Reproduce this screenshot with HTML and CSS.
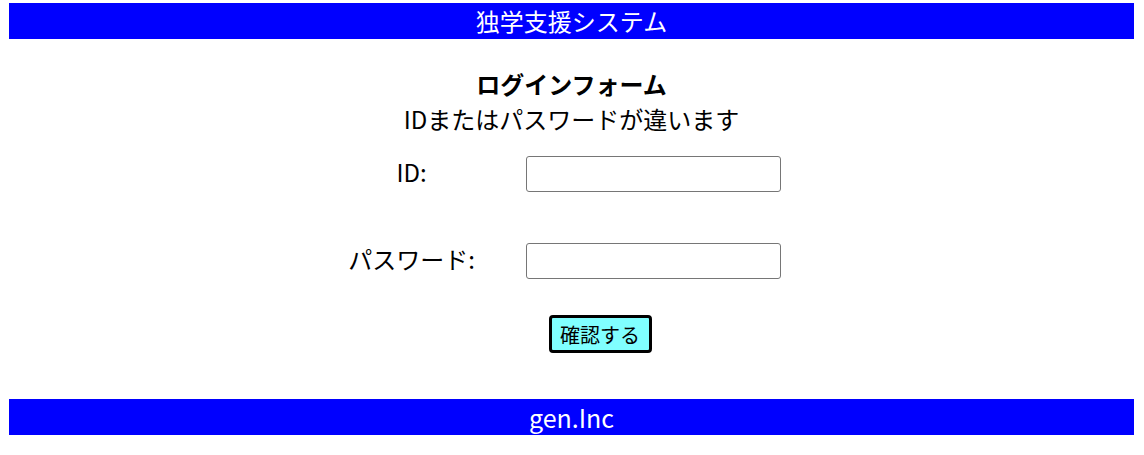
FILE: index.html
```html
<!DOCTYPE html>
<html lang="ja">
<head>
<meta charset="utf-8">
<title>ログインフォーム</title>
<link rel="stylesheet" href="styles.css">
</head>
<body>
<header class="bar bar-top">独学支援システム</header>
<main class="main">
  <h1 class="title">ログインフォーム</h1>
  <p class="error">IDまたはパスワードが違います</p>
  <form class="form">
    <label class="label" for="id">ID:</label>
    <input class="field" id="id" type="text">
    <label class="label" for="pw">パスワード:</label>
    <input class="field" id="pw" type="password">
    <div class="actions"><button class="btn" type="button">確認する</button></div>
  </form>
</main>
<footer class="bar bar-bottom">gen.Inc</footer>
</body>
</html>
```

FILE: styles.css
```css
html, body {
  margin: 0;
  padding: 0;
  background: #ffffff;
}
body {
  padding: 3px 10px 0 9px;
  font-family: "Noto Sans CJK JP", "Noto Sans", sans-serif;
  color: #000;
}
.bar {
  background: #0000ff;
  color: #ffffff;
  text-align: center;
  height: 36px;
  line-height: 36px;
  font-size: 24px;
}
.main {
  text-align: center;
}
.title {
  margin: 27px 0 0 0;
  font-size: 24px;
  font-weight: bold;
  line-height: 35px;
}
.error {
  margin: 0;
  font-size: 24px;
  line-height: 35px;
}
.form {
  width: 480px;
  margin: 20px auto 0 auto;
  display: grid;
  grid-template-columns: 160px 255px;
  column-gap: 34px;
  row-gap: 51px;
  align-items: center;
}
.label {
  font-size: 24px;
  text-align: center;
  line-height: 32px;
  padding-bottom: 4px;
}
.field {
  box-sizing: border-box;
  width: 255px;
  height: 36px;
  margin: 0;
  border: 1px solid #767676;
  border-radius: 3px;
  background: #fff;
  font-size: 16px;
}
.actions {
  grid-column: 1 / 3;
  text-align: left;
  padding-left: 217px;
  margin-top: -15px;
}
.btn {
  box-sizing: border-box;
  width: 103px;
  height: 38px;
  margin: 0;
  padding: 0;
  border: 3px solid #000;
  border-radius: 4px;
  background: #80ffff;
  font-family: "Noto Sans CJK JP", sans-serif;
  font-size: 20px;
  color: #000;
}
.bar-bottom {
  margin-top: 46px;
  font-size: 25px;
}
```
